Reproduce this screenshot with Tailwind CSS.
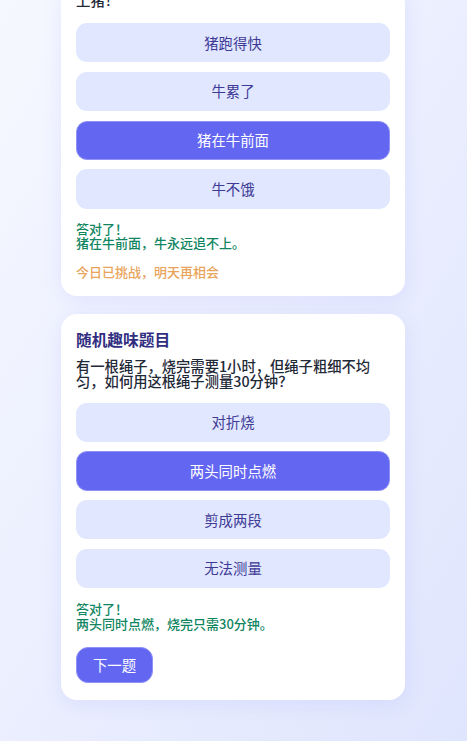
<!DOCTYPE html>
<html lang="zh-CN">
<head>
    <meta charset="UTF-8">
    <meta name="viewport" content="width=device-width, initial-scale=1.0">
    <title>趣味题目</title>
    <script src="https://cdn.jsdelivr.net/npm/@tailwindcss/browser@4"></script>
</head>
<body class="antialiased">
    <!-- 页面 -->
    <div class="h-[741px] overflow-hidden bg-gradient-to-br from-[#f6f8ff] to-[#dfe5fd] font-['Noto_Sans_CJK_SC','Noto_Sans',sans-serif]">
        <div class="w-[344px] ml-[61px] -mt-[12px] flex flex-col gap-[18px]">
            <!-- 第一张卡片 -->
            <section class="bg-white rounded-[16px] shadow-[0_4px_20px_rgba(99,102,241,0.1)] px-[15px] pb-[16px]">
                <p class="text-[14.4px] leading-[16px] font-medium text-[#1f2937] h-[20px] pt-[4px]">上猪！</p>
                <div class="mt-[15px] flex flex-col gap-[9.5px]">
                    <button class="h-[39px] rounded-[11px] bg-[#e0e7ff] text-[#3f3a96] text-[14.4px]">猪跑得快</button>
                    <button class="h-[39.5px] rounded-[11px] bg-[#e0e7ff] text-[#3f3a96] text-[14.4px]">牛累了</button>
                    <button class="h-[39px] rounded-[11px] bg-[#6366f1] text-white text-[14.4px] border border-[#8f91f4]">猪在牛前面</button>
                    <button class="h-[39.5px] rounded-[11px] bg-[#e0e7ff] text-[#3f3a96] text-[14.4px]">牛不饿</button>
                </div>
                <p class="mt-[13px] text-[13px] leading-[14.5px] font-medium text-[#10855f]">答对了！<br>猪在牛前面，牛永远追不上。</p>
                <p class="mt-[13px] text-[13px] leading-[16px] font-medium text-[#e9a45c]">今日已挑战，明天再相会</p>
            </section>
            <!-- 第二张卡片 -->
            <section class="bg-white rounded-[16px] shadow-[0_4px_20px_rgba(99,102,241,0.1)] px-[15px] pt-[17px] pb-[17px]">
                <h2 class="text-[15.7px] leading-[18px] font-bold text-[#312e81]">随机趣味题目</h2>
                <p class="mt-[9px] text-[14.3px] leading-[15.5px] font-medium text-[#1f2937]">有一根绳子，烧完需要1小时，但绳子粗细不均匀，如何用这根绳子测量30分钟？</p>
                <div class="mt-[14px] flex flex-col gap-[9.5px]">
                    <button class="h-[39px] rounded-[11px] bg-[#e0e7ff] text-[#3f3a96] text-[14.4px]">对折烧</button>
                    <button class="h-[39.5px] rounded-[11px] bg-[#6366f1] text-white text-[14.4px] border border-[#8f91f4]">两头同时点燃</button>
                    <button class="h-[39px] rounded-[11px] bg-[#e0e7ff] text-[#3f3a96] text-[14.4px]">剪成两段</button>
                    <button class="h-[39.5px] rounded-[11px] bg-[#e0e7ff] text-[#3f3a96] text-[14.4px]">无法测量</button>
                </div>
                <p class="mt-[14px] text-[13px] leading-[14.5px] font-medium text-[#10855f]">答对了！<br>两头同时点燃，烧完只需30分钟。</p>
                <button class="mt-[16px] block w-[77px] h-[36px] rounded-[12px] bg-[#6366f1] text-white text-[14.4px] border border-[#8f91f4]">下一题</button>
            </section>
        </div>
    </div>
</body>
</html>
